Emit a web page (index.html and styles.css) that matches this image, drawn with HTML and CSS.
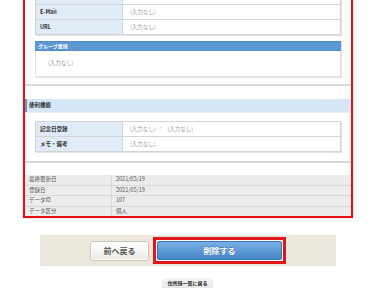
FILE: index.html
```html
<!DOCTYPE html>
<html lang="ja">
<head>
    <meta charset="UTF-8">
    <meta name="viewport" content="width=device-width, initial-scale=1.0">
    <title>住所録 削除確認</title>
    <link rel="stylesheet" href="styles.css">
</head>
<body>
    <div class="frame">
        <!-- Contact details (list is scrolled, the row above E-Mail is cut) -->
        <div class="section">
            <table class="detail">
                <tr><th></th><td></td></tr>
                <tr><th>E-Mail</th><td>(入力なし)</td></tr>
                <tr><th>URL</th><td>(入力なし)</td></tr>
            </table>
            <div class="group">
                <div class="group-title">グループ登録</div>
                <div class="group-body">(入力なし)</div>
            </div>
        </div>

        <!-- Extra features -->
        <div class="section">
            <div class="section-title">便利機能</div>
            <div class="section-body">
                <table class="detail">
                    <tr><th>記念日登録</th><td>(入力なし)&nbsp;&nbsp;：&nbsp;&nbsp;&nbsp;(入力なし)</td></tr>
                    <tr><th>メモ・備考</th><td>(入力なし)</td></tr>
                </table>
            </div>
        </div>

        <!-- Record info -->
        <table class="info">
            <tr><th>最終更新日</th><td>2021/05/19</td></tr>
            <tr><th>登録日</th><td>2021/05/19</td></tr>
            <tr><th>データID</th><td>107</td></tr>
            <tr><th>データ区分</th><td>個人</td></tr>
        </table>
    </div>

    <div class="actions">
        <button class="btn-back">前へ戻る</button>
        <div class="highlight">
            <button class="btn-delete">削除する</button>
        </div>
    </div>

    <button class="btn-list">住所録一覧に戻る</button>
    <div class="bottom-line"></div>
</body>
</html>
```

FILE: styles.css
```css
/* General reset */
body {
    margin: 0;
    padding: 0;
    font-family: "Noto Sans CJK JP", "Noto Sans", sans-serif;
    background-color: #ffffff;
    color: #333333;
}

button {
    font-family: inherit;
    cursor: pointer;
}

/* Red framed area */
.frame {
    box-sizing: border-box;
    width: 330px;
    margin: -23px 0 0 23px;
    border: 2px solid #e50f16;
    box-shadow: 0 0 1px rgba(229, 15, 22, 0.5);
    background-color: #ffffff;
}

.section {
    padding: 10px 10px 7px;
    border-bottom: 2px solid #d9d9d9;
}

.section + .section {
    margin-top: 13px;
    padding: 0;
}

/* Detail tables */
.detail {
    width: 100%;
    border-spacing: 0;
    border: 1px solid #d4d4d4;
    border-bottom: none;
    box-shadow: 1px 1px 0 #e2e2e2;
    font-size: 5.5px;
}

.detail th,
.detail td {
    height: 14px;
    line-height: 14px;
    padding: 0;
    border-bottom: 1px solid #d4d4d4;
    text-align: left;
    white-space: nowrap;
}

.detail th {
    width: 82px;
    padding-left: 4px;
    background-color: #e0ebf7;
    border-right: 1px solid #cfd8e2;
    color: #333333;
    font-weight: bold;
}

.detail td {
    padding-left: 7px;
    color: #999999;
}

/* Group box */
.group {
    margin-top: 6px;
    box-shadow: 1px 1px 0 #e2e2e2;
}

.group-title {
    height: 8px;
    line-height: 8px;
    padding-left: 3px;
    background-color: #5b97d1;
    border-top: 1px solid #4f8cc8;
    border-bottom: 1px solid #4f8cc8;
    color: #ffffff;
    font-size: 5px;
    font-weight: bold;
}

.group-body {
    height: 25px;
    line-height: 25px;
    padding-left: 12px;
    border: 1px solid #e4e4e4;
    border-top: none;
    color: #999999;
    font-size: 5.5px;
}

/* Section with light header */
.section-title {
    height: 13px;
    line-height: 13px;
    padding-left: 2px;
    background-color: #d5e6f5;
    border-left: 2px solid #5b97d1;
    color: #333333;
    font-size: 5.5px;
    font-weight: bold;
}

.section-body {
    padding: 8px 9px 9px;
    border: 1px solid #ececec;
    border-bottom: none;
}

/* Record info table */
.info {
    width: 100%;
    margin-top: 12px;
    border-spacing: 0;
    background-color: #ececec;
    font-size: 5.5px;
    color: #555555;
}

.info th,
.info td {
    height: 9.5px;
    line-height: 9.5px;
    padding: 0 0 0 4px;
    border-bottom: 1px solid #d8d8d8;
    text-align: left;
    font-weight: normal;
}

.info th {
    width: 82px;
    border-right: 1px solid #d8d8d8;
}

.info tr:last-child th,
.info tr:last-child td {
    border-bottom: none;
}

/* Button bar */
.actions {
    width: 296px;
    height: 31px;
    margin: 17px 0 0 40px;
    background-color: #ebe7dc;
    display: flex;
    justify-content: center;
    align-items: center;
    gap: 4px;
}

.btn-back {
    width: 59px;
    height: 20px;
    padding: 0;
    border: 1px solid #cbc6ba;
    border-radius: 3px;
    background: linear-gradient(#ffffff, #ebe9e3);
    box-shadow: inset 0 0 0 1px #ffffff;
    color: #555555;
    font-size: 8px;
    font-weight: bold;
}

.highlight {
    box-sizing: border-box;
    width: 133px;
    height: 27px;
    padding: 1px;
    border: 3px solid #e0161b;
    background-color: #ffffff;
    display: flex;
}

.btn-delete {
    flex: 1;
    padding: 0;
    border: 1px solid #3a75b6;
    border-radius: 2px;
    background: linear-gradient(#78b0e4, #4584c8);
    color: #ffffff;
    font-size: 8px;
    font-weight: bold;
    text-shadow: 0 -1px 0 rgba(0, 0, 0, 0.25);
}

/* Back to list */
.btn-list {
    display: block;
    width: 51px;
    height: 10px;
    margin: 12px 0 0 162px;
    padding: 0;
    border: none;
    border-radius: 1px;
    background: linear-gradient(#f6f6f6, #e6e6e6);
    color: #222222;
    font-size: 5px;
    font-weight: bold;
    line-height: 10px;
}

.bottom-line {
    width: 125px;
    margin: 13px 0 0 125px;
    border-top: 1px solid #e6e6e6;
}
```
